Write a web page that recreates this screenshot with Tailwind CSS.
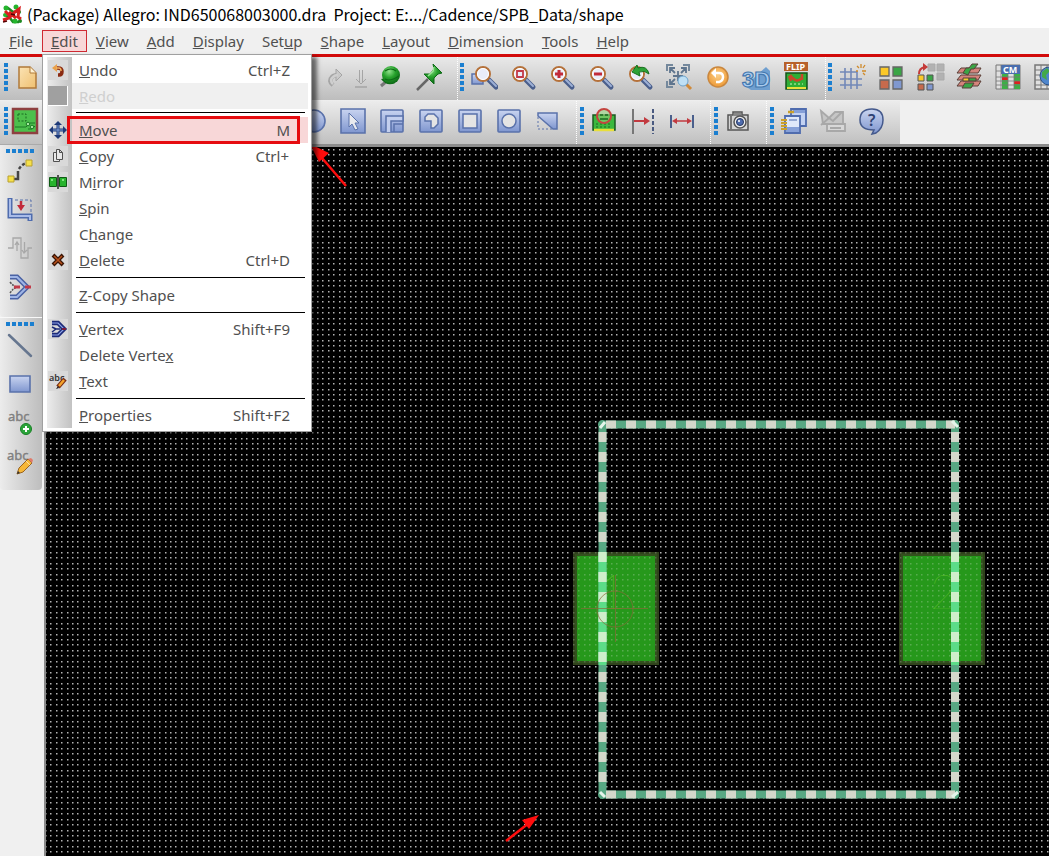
<!DOCTYPE html>
<html lang="en">
<head>
  <meta charset="UTF-8" />
  <meta name="viewport" content="width=device-width, initial-scale=1.0" />
  <title>(Package) Allegro</title>
  <script src="https://cdn.jsdelivr.net/npm/@tailwindcss/browser@4"></script>
</head>
<body class="min-h-screen flex flex-col bg-[#f0f0f0] font-['Noto_Sans',sans-serif] text-[15px] text-[#505050] overflow-hidden">

  <!-- Shared icon parts -->
  <svg width="0" height="0" class="absolute">
    <defs>
      <linearGradient id="blue" x1="0" y1="0" x2="0" y2="1">
        <stop offset="0" stop-color="#c9d4f0" />
        <stop offset="1" stop-color="#7f96cf" />
      </linearGradient>
      <linearGradient id="paper" x1="0" y1="0" x2="1" y2="1">
        <stop offset="0" stop-color="#fbe3b4" />
        <stop offset="1" stop-color="#efc070" />
      </linearGradient>
      <radialGradient id="ball" cx="0.4" cy="0.3" r="0.7">
        <stop offset="0" stop-color="#8fe08a" />
        <stop offset="0.5" stop-color="#27a22c" />
        <stop offset="1" stop-color="#0d6a16" />
      </radialGradient>
      <radialGradient id="orange" cx="0.5" cy="0.4" r="0.6">
        <stop offset="0" stop-color="#fbd08a" />
        <stop offset="1" stop-color="#ee9a35" />
      </radialGradient>
      <g id="lens">
        <path d="M17 17l7 7" stroke="#4a5f8c" stroke-width="5" stroke-linecap="round" />
        <path d="M18 17l6 6" stroke="#9db0d6" stroke-width="2" stroke-linecap="round" />
        <circle cx="11" cy="11" r="7" fill="#e9ecf8" stroke="#b5713a" stroke-width="2" />
        <circle cx="11" cy="11" r="5.500" fill="none" stroke="#fff" stroke-width="1" />
      </g>
      <g id="box">
        <rect x="3" y="3" width="22" height="22" rx="1" fill="url(#blue)" stroke="#5a72ab" stroke-width="1.600" />
      </g>
    </defs>
  </svg>

  <header class="h-7 shrink-0 bg-white flex items-center pl-[2px] gap-[5px] text-black">
    <svg class="w-5 h-5" viewBox="0 0 20 20" fill="none">
      <path d="M2 4h4l5 4 6-1M3 11l5 3 3 4h6" stroke="#1d8a22" stroke-width="2.500" />
      <circle cx="4" cy="4" r="2.500" fill="#25b52d" /><circle cx="14" cy="3" r="2.500" fill="#25b52d" />
      <circle cx="17" cy="8" r="2" fill="#1d8a22" /><circle cx="3" cy="11" r="2" fill="#25b52d" />
      <circle cx="13" cy="17" r="2.500" fill="#25b52d" /><circle cx="18" cy="17" r="2" fill="#1d8a22" />
      <path d="M1 16l6-2 6-6 4-3-1 8 3 2M7 8l7 6M3 7l5 5" stroke="#d81e1e" stroke-width="3" />
      <path d="M1 18l4-1M9 10l4 1" stroke="#500" stroke-width="1.500" />
    </svg>
    <h1 class="whitespace-pre leading-7 text-base font-['Noto_Sans_CJK_SC',sans-serif]">(Package) Allegro: IND650068003000.dra  Project: E:.../Cadence/SPB_Data/shape</h1>
  </header>

  <nav class="h-[26px] shrink-0 flex items-center whitespace-nowrap">
    <button class="h-[22px] leading-5 px-[9px]"><u>F</u>ile</button>
    <div class="relative h-full flex items-center">
      <button class="h-[22px] leading-5 px-2 border border-[#cf2a33] bg-[#f8d7d8]"><u>E</u>dit</button>

      <!-- Edit menu -->
      <div class="absolute z-20 left-0 top-full w-[270px] pt-[2px] pb-[3px] pl-1 pr-[3px] bg-white border border-[#a0a0a0] shadow-[5px_3px_4px_rgba(0,0,0,0.55)]">
        <div class="pl-[25px] bg-linear-to-r from-[#ececec] from-0% to-[#c2c2c2] to-[25px]">
          <div class="relative bg-white">
            <button class="w-full h-[26px] flex justify-between items-center pl-[7px] pr-[18px]"><span><u>U</u>ndo</span><span>Ctrl+Z</span>
              <svg class="absolute -left-6 w-5 h-5 bg-[#d9d9d9]" viewBox="0 0 20 20" fill="none"><path d="M7 8h3q4 0 4 3.500t-3 3.500h-1" stroke="#8a2b12" stroke-width="3.500" /><path d="M4 8l5-4v8z" fill="#e9a04a" /><path d="M8 8h3q2 0 2 3" stroke="#f2b261" stroke-width="1.500" /></svg>
            </button>
            <button disabled class="w-full h-[26px] flex justify-between items-center pl-[7px] bg-[#f0f0f0] text-[#cfcfcf]"><span><u>R</u>edo</span>
              <span class="absolute -left-6 w-5 h-5 bg-[#a0a0a0] border-r border-b border-white"></span>
            </button>
            <hr class="mt-[3px] mb-1 ml-1 mr-[3px] h-px border-0 bg-black" />
            <button class="w-full h-[26px] flex justify-between items-center pl-[7px] pr-[18px] bg-[#f8d7d8]"><span><u>M</u>ove</span><span>M</span>
              <svg class="absolute -left-6 w-5 h-5" viewBox="0 0 20 20" fill="none"><path d="M10 3v14M3 10h14" stroke="#1e3a78" stroke-width="3" /><path d="M6 5h8l-4-4zM6 15h8l-4 4zM5 6v8l-4-4zM15 6v8l4-4z" fill="#1e3a78" /><path d="M10 5v10M5 10h10" stroke="#7e9fd8" /></svg>
              <span class="absolute -left-[5px] -mt-px w-[233px] h-7 border-[3px] border-[#e60c10]"></span>
            </button>
            <button class="w-full h-[26px] flex justify-between items-center pl-[7px] pr-[19px]"><span><u>C</u>opy</span><span>Ctrl+</span>
              <svg class="absolute -left-6 w-5 h-5 bg-[#d9d9d9]" viewBox="0 0 20 20" fill="#e8e8e8" stroke="#505050"><path d="M5.500 6.500h6v9h-6z" /><path d="M8.500 3.500h3l3 3v7h-6zM11.500 3.500v3h3" /></svg>
            </button>
            <button class="w-full h-[26px] flex justify-between items-center pl-[7px]"><span>M<u>i</u>rror</span>
              <svg class="absolute -left-6 w-5 h-5 bg-[#d9d9d9]" viewBox="0 0 20 20"><path d="M1.500 5.500h7v9h-7zM11.500 5.500h7v9h-7z" fill="#27b32d" stroke="#0e5a14" /><path d="M10 3v14" stroke="#222" stroke-width="1.500" /><path d="M3 7h2v2h-2zM14 7h2v2h-2z" fill="#7ee37c" /></svg>
            </button>
            <button class="w-full h-[26px] flex justify-between items-center pl-[7px]"><span><u>S</u>pin</span></button>
            <button class="w-full h-[26px] flex justify-between items-center pl-[7px]"><span>C<u>h</u>ange</span></button>
            <button class="w-full h-[26px] flex justify-between items-center pl-[7px] pr-[18px]"><span><u>D</u>elete</span><span>Ctrl+D</span>
              <svg class="absolute -left-6 w-5 h-5 bg-[#d9d9d9]" viewBox="0 0 20 20"><path d="M5 5l10 10M15 5l-10 10" stroke="#3a1505" stroke-width="4" /><path d="M6 6l8 8M14 6l-8 8" stroke="#b9501a" stroke-width="1.500" /></svg>
            </button>
            <hr class="my-1 ml-1 mr-[3px] h-px border-0 bg-black" />
            <button class="w-full h-[26px] flex justify-between items-center pl-[7px]"><span><u>Z</u>-Copy Shape</span></button>
            <hr class="mt-1 mb-[3px] ml-1 mr-[3px] h-px border-0 bg-black" />
            <button class="w-full h-[26px] flex justify-between items-center pl-[7px] pr-[18px]"><span><u>V</u>ertex</span><span>Shift+F9</span>
              <svg class="absolute -left-6 w-5 h-5 bg-[#d9d9d9]" viewBox="0 0 20 20" fill="none"><path d="M4 4h6l6 6-6 6h-6" stroke="#1c2a78" stroke-width="4.500" /><path d="M4 4h6l6 6-6 6h-6" stroke="#8fa4e8" stroke-width="1.200" /><path d="M4 8l4 2-4 3M8 10h4" stroke="#1c2a78" stroke-width="1.500" /><path d="M14 10h4" stroke="#7a1c3c" stroke-width="2" /></svg>
            </button>
            <button class="w-full h-[26px] flex justify-between items-center pl-[7px]"><span>Delete Verte<u>x</u></span></button>
            <button class="w-full h-[26px] flex justify-between items-center pl-[7px]"><span><u>T</u>ext</span>
              <svg class="absolute -left-6 w-5 h-5 bg-[#d9d9d9] overflow-visible" viewBox="0 0 20 20"><text x="1" y="10" font-size="9" font-weight="600" fill="#333">abc</text><path d="M17 8l-7 8" stroke="#7a2c12" stroke-width="4.500" /><path d="M16 9l-5 6" stroke="#f5a32a" stroke-width="2.500" /><path d="M10 15l-2 3 3-1z" fill="#222" /></svg>
            </button>
            <hr class="mt-1 mb-[3px] ml-1 mr-[3px] h-px border-0 bg-black" />
            <button class="w-full h-[26px] flex justify-between items-center pl-[7px] pr-[18px]"><span><u>P</u>roperties</span><span>Shift+F2</span></button>
          </div>
        </div>
      </div>
    </div>
    <button class="h-[22px] leading-5 px-[9px]"><u>V</u>iew</button>
    <button class="h-[22px] leading-5 px-[9px]"><u>A</u>dd</button>
    <button class="h-[22px] leading-5 px-[9px]"><u>D</u>isplay</button>
    <button class="h-[22px] leading-5 px-[9px]">Set<u>u</u>p</button>
    <button class="h-[22px] leading-5 px-[9px]"><u>S</u>hape</button>
    <button class="h-[22px] leading-5 px-[9px]"><u>L</u>ayout</button>
    <button class="h-[22px] leading-5 px-[9px]"><u>D</u>imension</button>
    <button class="h-[22px] leading-5 px-[9px]"><u>T</u>ools</button>
    <button class="h-[22px] leading-5 px-[9px]"><u>H</u>elp</button>
  </nav>

  <!-- Toolbar, first row -->
  <div class="h-[46px] shrink-0 flex border-t-[3px] border-[#d20a0a] overflow-hidden">
    <div class="w-[458px] shrink-0 flex items-center pl-1 pr-[9px] pb-[3px] bg-linear-to-b from-[#e9e9e9] to-[#bdbdbd] border-r border-dotted border-r-white">
      <i class="w-1 h-7 shrink-0 bg-[repeating-linear-gradient(#1b7fd0_0_4px,transparent_4px_6px)]"></i>
      <button aria-label="New" class="w-[39px] grid place-items-center"><svg class="w-7 h-7" viewBox="0 0 28 28"><path d="M5 4h11l6 6v15h-17z" fill="url(#paper)" stroke="#b07a3a" stroke-width="1.500" /><path d="M16 4v6h6" fill="#fff2d2" stroke="#b07a3a" /></svg></button>
      <div class="flex-1"></div>
      <button aria-label="Redo" class="w-7 shrink-0 grid place-items-center"><svg class="w-6 h-6" viewBox="0 0 24 24" fill="none"><path d="M9 20q-5-4-1-8 2-2 6-2" stroke="#a5a5a5" stroke-width="4.500" /><path d="M12 4l6 6-6 6z" fill="#c9c9c9" stroke="#a5a5a5" /><path d="M9 19q-4-4 0-7 2-2 5-2" stroke="#cfcfcf" stroke-width="2.500" /></svg></button>
      <button aria-label="Down" class="w-5 shrink-0 grid place-items-center"><svg class="w-5 h-6" viewBox="0 0 20 24" fill="none" stroke="#a5a5a5"><path d="M9.500 5v12M12.500 5v12M6 14l5 5 5-5" /><path d="M5 22h12" stroke-width="1.500" /></svg></button>
      <button aria-label="Fix" class="w-[39px] shrink-0 grid place-items-center"><svg class="w-7 h-7" viewBox="0 0 28 28"><path d="M5 23l7-6" stroke="#777" stroke-width="3" /><path d="M5 16q6 8 14 4l-4-6z" fill="#0d6a16" /><circle cx="15" cy="12" r="9" fill="url(#ball)" /><path d="M9 16q5 3 14-3M9 8q6-4 11 0" stroke="#0d6a16" fill="none" stroke-width="1.200" /></svg></button>
      <button aria-label="Unfix" class="w-[39px] shrink-0 grid place-items-center"><svg class="w-8 h-8" viewBox="0 0 32 32"><path d="M4 29l11-11" stroke="#666" stroke-width="2.500" /><path d="M20 3l9 9-4 1-4 4v6l-10-10h6l4-5z" fill="url(#ball)" stroke="#0d6a16" /><path d="M21 6l-1 4-5 5" stroke="#9be597" stroke-width="1.500" fill="none" /></svg></button>
    </div>

    <div class="shrink-0 flex items-center pl-[2px] pr-[10px] pb-[3px] bg-linear-to-b from-[#e9e9e9] to-[#bdbdbd] border-r border-dotted border-r-white">
      <i class="w-1 h-7 shrink-0 bg-[repeating-linear-gradient(#1b7fd0_0_4px,transparent_4px_6px)]"></i>
      <button aria-label="Zoom by points" class="w-[39px] grid place-items-center"><svg class="w-7 h-7" viewBox="0 0 28 28"><path d="M2 11h11v10h-11z" fill="url(#blue)" stroke="#5a72ab" stroke-width="1.500" /><use href="#lens" x="2" /></svg></button>
      <button aria-label="Zoom fit" class="w-[39px] grid place-items-center"><svg class="w-7 h-7" viewBox="0 0 28 28"><use href="#lens" /><path d="M8 8h6v6h-6z" fill="none" stroke="#c43a48" stroke-width="1.800" /></svg></button>
      <button aria-label="Zoom in" class="w-[39px] grid place-items-center"><svg class="w-7 h-7" viewBox="0 0 28 28"><use href="#lens" /><path d="M11 7v8M7 11h8" stroke="#c22a3a" stroke-width="3" /></svg></button>
      <button aria-label="Zoom out" class="w-[39px] grid place-items-center"><svg class="w-7 h-7" viewBox="0 0 28 28"><use href="#lens" /><path d="M7 11h8" stroke="#c22a3a" stroke-width="3" /></svg></button>
      <button aria-label="Zoom previous" class="w-[39px] grid place-items-center"><svg class="w-7 h-7" viewBox="0 0 28 28"><use href="#lens" /><path d="M23 11q-2-9-11-6l-1-3-5 7 8 4-1-4q6-2 10 2z" fill="#2ea236" stroke="#14701c" /></svg></button>
      <button aria-label="Zoom selection" class="w-[39px] grid place-items-center"><svg class="w-7 h-7" viewBox="0 0 28 28" fill="none"><path d="M2 8v-6h6M18 2h6v6M2 18v6h6" stroke="#74889c" stroke-width="2" /><path d="M5 10v-5h5M5 5l5 5M21 10v-5h-5M21 5l-5 5M5 16v5h5M5 21l5-5M13 8v10M8 13h10" stroke="#5f758e" stroke-width="1.800" /><path d="M20 20l6 6" stroke="#d08a3a" stroke-width="3" /><circle cx="18" cy="18" r="5" fill="#bfe0f5" stroke="#6da3cc" /></svg></button>
      <button aria-label="Redraw" class="w-[39px] grid place-items-center"><svg class="w-7 h-7" viewBox="0 0 28 28"><circle cx="14" cy="14" r="10" fill="url(#orange)" stroke="#c9873f" stroke-width="1.500" /><path d="M10 10h5q4 0 4 4t-4 5h-3" fill="none" stroke="#fff" stroke-width="2.500" /><path d="M7 10l5-5v10z" fill="#fff" /></svg></button>
      <button aria-label="3D view" class="w-[39px] grid place-items-center"><svg class="w-8 h-8 overflow-visible" viewBox="0 0 32 32"><path d="M4 25l6 4h19v-19l-4-4z" fill="#6f9fd0" /><text x="1" y="26" font-size="22" font-weight="700" fill="#a9cbee" stroke="#4478ae" stroke-width="1.200" font-family="Liberation Sans, sans-serif">3D</text></svg></button>
      <button aria-label="Flip" class="w-[39px] grid place-items-center"><svg class="w-7 h-8 overflow-visible" viewBox="0 0 28 32"><path d="M4 12h21v16h-21z" fill="#2fae35" stroke="#14561a" stroke-width="1.500" /><path d="M5 27h19" stroke="#e8df3a" stroke-width="2" /><path d="M8 14q6 9 12 3M9 20l-2-5M20 13v6" stroke="#c9472a" stroke-width="2.500" fill="none" /><path d="M8 23h13" stroke="#c4f7b8" stroke-dasharray="2 2" /><path d="M2 1h24v9h-24z" fill="#b7602a" /><text x="4" y="9" font-size="9" font-weight="700" fill="#fff">FLIP</text></svg></button>
    </div>

    <div class="grow shrink-0 flex items-center pl-[2px] pb-[3px] bg-linear-to-b from-[#e9e9e9] to-[#bdbdbd]">
      <i class="w-1 h-7 shrink-0 bg-[repeating-linear-gradient(#1b7fd0_0_4px,transparent_4px_6px)]"></i>
      <button aria-label="Grid toggle" class="w-[39px] grid place-items-center"><svg class="w-7 h-7" viewBox="0 0 28 28" fill="none"><path d="M7 5v21M13 5v21M19 8v18M2 9h17M2 16h22M2 22h22" stroke="#7288b8" stroke-width="1.600" /><path d="M23 1v4M19 3l2 2M27 2l-2 3M24 8h4M20 8h-2M25 10l2 2" stroke="#d08a2a" stroke-width="1.300" /></svg></button>
      <button aria-label="Color" class="w-[39px] grid place-items-center"><svg class="w-7 h-7" viewBox="0 0 28 28" stroke="#666" stroke-width="1.300"><path d="M3 4h9v9h-9z" fill="#fbc928" /><path d="M16 4h9v9h-9z" fill="#3aa546" /><path d="M3 17h9v9h-9z" fill="#c66a4c" /><path d="M16 17h9v9h-9z" fill="#8098cf" /></svg></button>
      <button aria-label="Shadow" class="w-[39px] grid place-items-center"><svg class="w-8 h-8" viewBox="0 0 32 32" stroke="#555"><path d="M14 3h7v7h-7zM23 3h7v7h-7zM23 12h7v7h-7z" fill="#b2b2b2" stroke="#aaa" /><path d="M4 14h6v6h-6z" fill="#fbc928" /><path d="M13 14h6v6h-6z" fill="#3aa546" /><path d="M4 23h6v6h-6z" fill="#c66a4c" /><path d="M13 23h6v6h-6z" fill="#8098cf" /><path d="M5 13q0-6 6-7" fill="none" stroke="#c43a38" stroke-width="2" /><path d="M9 2l5 4-5 4z" fill="#c43a38" stroke="none" /></svg></button>
      <button aria-label="Cross section" class="w-[39px] grid place-items-center"><svg class="w-7 h-7" viewBox="0 0 28 28" stroke="#5a4038"><path d="M2 23l4-5h20l-3 5z" fill="#d5847c" /><path d="M7 25l3-5h9l-3 5z" fill="#3aa546" /><path d="M2 17l4-5h20l-3 5z" fill="#d5847c" /><path d="M8 15h6v3h-6z" fill="#f2d030" /><path d="M14 15h7v3h-7z" fill="#3aa546" /><path d="M2 10l4-5h20l-3 5z" fill="#d5847c" /><path d="M8 10l3-5h3l3-4h6l-4 5h-3l-3 6z" fill="#3aa546" /></svg></button>
      <button aria-label="Constraint manager" class="w-[39px] grid place-items-center"><svg class="w-7 h-7" viewBox="0 0 28 28"><path d="M2 2h24v24h-24z" fill="#e0e0e0" stroke="#777" /><path d="M7 2h19v9h-19z" fill="#4a6eae" /><text x="9" y="9.500" font-size="9" font-weight="700" fill="#fff">CM</text><path d="M8 11h6v15h-6zM20 11h6v15h-6z" fill="#3cb045" /><path d="M8 14h6v3h-6zM20 18h6v3h-6z" fill="#e02020" /><path d="M2 8h5M2 14h24M2 18h24M2 22h24M7 2v24M14 11v15M20 11v15" stroke="#777" stroke-width="0.800" /></svg></button>
      <button aria-label="Web tables" class="w-[39px] grid place-items-center"><svg class="w-7 h-7" viewBox="0 0 28 28"><path d="M2 2h24v24h-24z" fill="#e0e0e0" stroke="#777" stroke-width="1.500" /><path d="M2 7h24M2 12h24M2 17h24M2 22h24M8 2v24M14 2v24M20 2v24" stroke="#777" /><circle cx="16" cy="13" r="9" fill="#4f86cc" stroke="#2d4f80" /><path d="M9 9l5-4 3 3-4 4 1 5-5-3zM18 10l6-1v6l-5 2z" fill="#42a94a" /></svg></button>
    </div>
  </div>

  <!-- Toolbar, second row -->
  <div class="h-11 shrink-0 flex border-t border-[#eee]">
    <div class="w-[577px] shrink-0 flex items-center pl-1 pr-[9px] pb-[3px] bg-linear-to-b from-[#ececec] to-[#c0c0c0] border-r border-dotted border-r-white">
      <i class="w-1 h-7 shrink-0 bg-[repeating-linear-gradient(#1b7fd0_0_4px,transparent_4px_6px)]"></i>
      <button aria-label="General edit" class="w-[34px] grid place-items-center"><svg class="w-7 h-7" viewBox="0 0 28 28" fill="none"><path d="M2 2h24v24h-24z" fill="#4cc04c" stroke="#8e4040" stroke-width="2.500" /><path d="M7 7h8v7h-8z" stroke="#1a6a20" stroke-dasharray="2 1.500" /><path d="M4 20h11l4-4h5M17 22h4l3-3" stroke="#1a7a24" /><circle cx="17" cy="17" r="1.800" fill="#a7e8a0" stroke="#1a7a24" /><circle cx="21" cy="20" r="1.800" fill="#a7e8a0" stroke="#1a7a24" /></svg></button>
      <div class="flex-1"></div>
      <button aria-label="Circle shape" class="w-[39px] shrink-0 grid place-items-center"><svg class="w-7 h-7" viewBox="0 0 28 28"><circle cx="14" cy="14" r="11" fill="url(#blue)" stroke="#5a72ab" stroke-width="1.600" /></svg></button>
      <button aria-label="Select shape" class="w-[39px] shrink-0 grid place-items-center"><svg class="w-7 h-7" viewBox="0 0 28 28"><path d="M2 2h24v24h-24z" fill="url(#blue)" stroke="#5a72ab" stroke-width="1.600" /><path d="M10 6v14l3-3 3 6 3-1-3-6h4z" fill="#e9eaee" stroke="#5a72ab" /></svg></button>
      <button aria-label="Shape edit" class="w-[39px] shrink-0 grid place-items-center"><svg class="w-7 h-7" viewBox="0 0 28 28"><use href="#box" /><path d="M8 25v-16h17v5h-12v11" fill="#c3cfee" stroke="#5a72ab" stroke-width="1.500" /><path d="M16 25v-8h9" fill="none" stroke="#5a72ab" stroke-width="1.500" /></svg></button>
      <button aria-label="Polygon void" class="w-[39px] shrink-0 grid place-items-center"><svg class="w-7 h-7" viewBox="0 0 28 28"><use href="#box" /><path d="M8 14v-4l3-3h6l4 4v6l-4 4h-3v-7z" fill="#e4e4e4" stroke="#5a72ab" stroke-width="1.500" /></svg></button>
      <button aria-label="Rectangle void" class="w-[39px] shrink-0 grid place-items-center"><svg class="w-7 h-7" viewBox="0 0 28 28"><use href="#box" /><path d="M7 7h14v14h-14z" fill="#e4e4e4" stroke="#5a72ab" stroke-width="1.500" /></svg></button>
      <button aria-label="Circle void" class="w-[39px] shrink-0 grid place-items-center"><svg class="w-7 h-7" viewBox="0 0 28 28"><use href="#box" /><circle cx="14" cy="14" r="7" fill="#e4e4e4" stroke="#5a72ab" stroke-width="1.500" /></svg></button>
      <button aria-label="Delete islands" class="w-[39px] shrink-0 grid place-items-center"><svg class="w-7 h-7" viewBox="0 0 28 28" fill="none"><path d="M4 6h19v16h-4l-15-13z" fill="url(#blue)" stroke="#5a72ab" stroke-width="1.500" /><path d="M4 10v12h15" stroke="#5a72ab" stroke-dasharray="2 2" /></svg></button>
    </div>

    <div class="flex items-center pl-[3px] pr-[9px] pb-[3px] bg-linear-to-b from-[#ececec] to-[#c0c0c0] border-r border-dotted border-r-white">
      <i class="w-1 h-7 shrink-0 bg-[repeating-linear-gradient(#1b7fd0_0_4px,transparent_4px_6px)]"></i>
      <button aria-label="Show element" class="w-[39px] grid place-items-center"><svg class="w-7 h-7" viewBox="0 0 28 28" fill="none"><path d="M3 8h22v15h-22z" fill="#3cb83e" stroke="#1a5a20" stroke-width="1.500" /><path d="M4 23h20" stroke="#e8df3a" stroke-width="2.500" /><path d="M6 17h16M6 20h16" stroke="#1a6a20" stroke-dasharray="2 2" /><circle cx="14" cy="9" r="7" fill="#8fce78" fill-opacity="0.600" stroke="#c4443e" stroke-width="2" /><path d="M10 8h3M15 8h3M10 12h8" stroke="#1a6a20" stroke-width="1.500" /></svg></button>
      <button aria-label="Show measure" class="w-[39px] grid place-items-center"><svg class="w-7 h-7" viewBox="0 0 28 28" fill="none"><path d="M4 2v25" stroke="#777" stroke-width="2" /><path d="M24 2v25" stroke="#4a5a80" stroke-width="2" stroke-dasharray="4 2" /><path d="M5 14h12" stroke="#c23a40" stroke-width="2" /><path d="M15 10l6 4-6 4z" fill="#c23a40" /></svg></button>
      <button aria-label="Dimension" class="w-[39px] grid place-items-center"><svg class="w-7 h-7" viewBox="0 0 28 28" fill="none"><path d="M3 8v13M25 8v13" stroke="#4a5f8c" stroke-width="2" /><path d="M6 14h16" stroke="#c23a40" stroke-width="1.500" /><path d="M9 11l-5 3 5 3zM19 11l5 3-5 3z" fill="#c23a40" /></svg></button>
    </div>

    <div class="flex items-center pl-[3px] pr-[9px] pb-[3px] bg-linear-to-b from-[#ececec] to-[#c0c0c0] border-r border-dotted border-r-white">
      <i class="w-1 h-7 shrink-0 bg-[repeating-linear-gradient(#1b7fd0_0_4px,transparent_4px_6px)]"></i>
      <button aria-label="Capture" class="w-[39px] grid place-items-center"><svg class="w-7 h-7" viewBox="0 0 28 28"><path d="M4 8h5v-3h9v3h6v15h-20z" fill="#d4d4d4" stroke="#555" stroke-width="1.500" /><path d="M7 9v13" stroke="#777" stroke-width="2" /><path d="M10 6h7v3h-7z" fill="#888" /><circle cx="16" cy="15" r="6" fill="#eee" stroke="#555" stroke-width="1.500" /><circle cx="16" cy="15" r="3.500" fill="#4f6cae" stroke="#26375f" /><circle cx="15" cy="14" r="1" fill="#fff" /></svg></button>
    </div>

    <div class="flex items-center pl-[3px] pr-[9px] pb-[3px] bg-linear-to-b from-[#ececec] to-[#c0c0c0]">
      <i class="w-1 h-7 shrink-0 bg-[repeating-linear-gradient(#1b7fd0_0_4px,transparent_4px_6px)]"></i>
      <button aria-label="Reports" class="w-[39px] grid place-items-center"><svg class="w-7 h-7" viewBox="0 0 28 28"><path d="M11 2h15v17h-15z" fill="#c3d2f2" stroke="#4f6cae" stroke-width="1.800" /><path d="M13 3h12v3h-12z" fill="#86a0d8" /><path d="M8 5h6" stroke="#caa02c" stroke-width="2.500" /><path d="M5 9h15v17h-15z" fill="#dfe8fa" stroke="#4f6cae" stroke-width="1.800" /><path d="M6 20h13v5h-13z" fill="#86a0d8" /><path d="M9 13h8" stroke="#4f6cae" /><path d="M1 13h6M1 16h6M1 19h6M1 22h6" stroke="#caa02c" stroke-width="2" /></svg></button>
      <button aria-label="Mail" class="w-[39px] grid place-items-center"><svg class="w-7 h-7" viewBox="0 0 28 28" fill="none" stroke="#a8a8a8" stroke-width="1.800"><path d="M2 4l8 7 6-6 8 0v12h-20z" fill="#c6c6c6" /><path d="M2 18l8-7 4 3 9-9" /><path d="M8 17h18v7h-18zM11 21h11" fill="#d8d8d8" /></svg></button>
      <button aria-label="Help" class="w-[39px] grid place-items-center"><svg class="w-7 h-7" viewBox="0 0 28 28"><path d="M14 2q11 0 11 11 0 8-7 13l-4 1 2-4q-14 0-14-10 0-11 12-11z" fill="url(#blue)" stroke="#44598c" stroke-width="1.500" /><text x="10" y="19" font-size="16" font-weight="600" fill="#2d4173">?</text></svg></button>
    </div>
  </div>

  <div class="flex-1 flex">
    <!-- Side toolbar -->
    <aside class="w-[42px] shrink-0">
      <div class="flex flex-col items-center pt-1 pb-[11px] pr-[3px] border-t border-[#aaa] bg-linear-to-r from-[#ececec] to-[#bdbdbd] rounded-bl">
        <i class="w-7 h-1 shrink-0 bg-[repeating-linear-gradient(90deg,#1b7fd0_0_4px,transparent_4px_6px)]"></i>
        <button aria-label="Add connect" class="h-[38px] grid place-items-center"><svg class="w-7 h-7" viewBox="0 0 28 28" fill="none"><path d="M7 21h5v-8" stroke="#444" stroke-width="2.500" /><path d="M13 11q3-5 8-6" stroke="#444" stroke-width="2.500" stroke-dasharray="3 2" /><path d="M2 18h6v6h-6z" fill="#f5e04a" stroke="#b8a030" /><path d="M20 2h6v6h-6z" fill="#f5e04a" stroke="#b8a030" /></svg></button>
        <button aria-label="Slide" class="h-[38px] grid place-items-center"><svg class="w-7 h-7" viewBox="0 0 28 28" fill="none"><path d="M9 4h16v12" stroke="#5a72ab" stroke-dasharray="3 2" /><path d="M4 2v18h20v5" stroke="#4f6cae" stroke-width="5" /><path d="M4 3v17h20v4" stroke="#a9bce8" stroke-width="2" /><path d="M15 5v5" stroke="#c22a3a" stroke-width="2.500" /><path d="M11 9h8l-4 6z" fill="#c22a3a" /></svg></button>
        <button aria-label="Delay tune" class="h-[38px] grid place-items-center"><svg class="w-7 h-7" viewBox="0 0 28 28" fill="none" stroke="#a8a8a8" stroke-width="1.300"><path d="M2 14h5v-10h8v20h7v-10h4M11 17v-9M9 11l2-3 2 3M18.500 8v11M16 16l2 3 3-3" /></svg></button>
        <button aria-label="Vertex" class="h-[39px] grid place-items-center"><svg class="w-7 h-7" viewBox="0 0 28 28" fill="none"><path d="M4 4h7l10 10-10 10h-7" stroke="#4a62a4" stroke-width="5" /><path d="M4 4h7l10 10-10 10h-7" stroke="#9fb5e6" stroke-width="2" /><path d="M4 9q4 5 8 5-4 0-8 6" stroke="#555" stroke-dasharray="2 1" stroke-width="1.500" /><path d="M8 14h6M19 14h6" stroke="#c23a48" stroke-width="3" /></svg></button>
      </div>
      <div class="flex flex-col items-center pt-1 pb-2 pr-[3px] border-t border-[#f8f8f8] bg-linear-to-r from-[#ececec] to-[#bdbdbd] rounded-b">
        <i class="w-7 h-1 shrink-0 bg-[repeating-linear-gradient(90deg,#1b7fd0_0_4px,transparent_4px_6px)]"></i>
        <button aria-label="Add line" class="h-[39px] grid place-items-center"><svg class="w-7 h-7" viewBox="0 0 28 28"><path d="M3 3l22 21" stroke="#66768f" stroke-width="2.500" stroke-linecap="round" /></svg></button>
        <button aria-label="Add rectangle" class="h-[39px] grid place-items-center"><svg class="w-7 h-7" viewBox="0 0 28 28"><path d="M4 5h20v16h-20z" fill="url(#blue)" stroke="#5a72ab" stroke-width="1.600" /></svg></button>
        <button aria-label="Add text" class="h-[39px] grid place-items-center"><svg class="w-7 h-7 overflow-visible" viewBox="0 0 28 28"><text x="2" y="11" font-size="13" fill="#808080" stroke="#808080" stroke-width="0.400">abc</text><circle cx="20" cy="19" r="5.500" fill="#2ba43a" stroke="#168024" /><path d="M20 16v6M17 19h6" stroke="#fff" stroke-width="2" /></svg></button>
        <button aria-label="Edit text" class="h-[39px] grid place-items-center"><svg class="w-7 h-7 overflow-visible" viewBox="0 0 28 28"><text x="1" y="11" font-size="13" fill="#808080" stroke="#808080" stroke-width="0.400">abc</text><path d="M13 19l9-9 4 4-9 9-6 2z" fill="#f6b738" stroke="#9a6420" /><path d="M20 12l4 4" stroke="#fbe0a0" /><path d="M22 10l4 4 1-3-2-2z" fill="#e07a6a" /><path d="M11 25l1-3 2 2z" fill="#333" /></svg></button>
      </div>
    </aside>

    <!-- Design canvas -->
    <main class="relative flex-1 ml-[2px] border-l-2 border-t-[3px] border-[#8c8c8c] bg-black overflow-hidden">
      <svg class="absolute inset-0 w-full h-full" fill="none">
        <defs>
          <!-- nine dots on 49 units, alternating steps of 5 and 6 -->
          <pattern id="dots" x="26" y="2" width="49" height="49" patternUnits="userSpaceOnUse">
            <g stroke="#b4b4b4" stroke-width="1.500" stroke-dasharray="1.500 3.500 1.500 4.500 1.500 3.500 1.500 4.500 1.500 3.500 1.500 4.500 1.500 3.500 1.500 4.500 1.500 3.500">
              <path d="M0 .75h49M0 5.750h49M0 11.750h49M0 16.750h49M0 22.750h49M0 27.750h49M0 33.750h49M0 38.750h49M0 44.750h49" />
            </g>
          </pattern>
        </defs>
        <rect width="100%" height="100%" fill="url(#dots)" />

        <!-- pads -->
        <g fill="#2aa81e" fill-opacity="0.900" stroke="#35491f" stroke-opacity="0.900" stroke-width="4">
          <rect x="529" y="407" width="82" height="109" />
          <rect x="855" y="407" width="82" height="109" />
        </g>
        <g fill="url(#dots)" opacity="0.250">
          <rect x="527" y="405" width="86" height="113" />
          <rect x="853" y="405" width="86" height="113" />
        </g>
        <g font-family="Lato, sans-serif" font-weight="100" font-size="48" fill="#5fc02a">
          <text x="552" y="462">1</text>
          <text x="884" y="462">2</text>
        </g>

        <!-- package outline -->
        <path d="M556.500 277v371M909 277v371M556 277.500h353M556 647.500h353" stroke="#58a883" stroke-width="8" stroke-linecap="round" />
        <g stroke="#d4d8cb" stroke-width="8" stroke-dasharray="10 10">
          <path d="M556.500 285v360M909 285v360M560 277.500h349M560 647.500h349" />
        </g>
        <path d="M556.500 405v113M909 405v113" stroke="#5cdc88" stroke-width="8" />
        <path d="M556.500 405v113M909 405v113" stroke="#cfeecb" stroke-width="8" stroke-dasharray="10 10" />
        <path d="M554 281l5-6M906 274l6 6M554 645l5 5M906 650l6-5" stroke="#e4f5ea" stroke-width="3" />

        <!-- origin mark -->
        <g stroke="#8a6a3a" stroke-opacity="0.700">
          <circle cx="569" cy="462" r="18" />
          <path d="M535 461.500h67M569.500 428v67" />
        </g>

        <g stroke="#ff0d0d" fill="#ff0d0d">
          <path d="M300 39l-24-28" stroke-width="2.500" />
          <path d="M264-3l19 9-10 9z" stroke="none" />
          <path d="M460 694l23-18" stroke-width="2.500" />
          <path d="M493 668l-17 5 7 9z" stroke="none" />
        </g>
      </svg>
    </main>
  </div>
</body>
</html>
